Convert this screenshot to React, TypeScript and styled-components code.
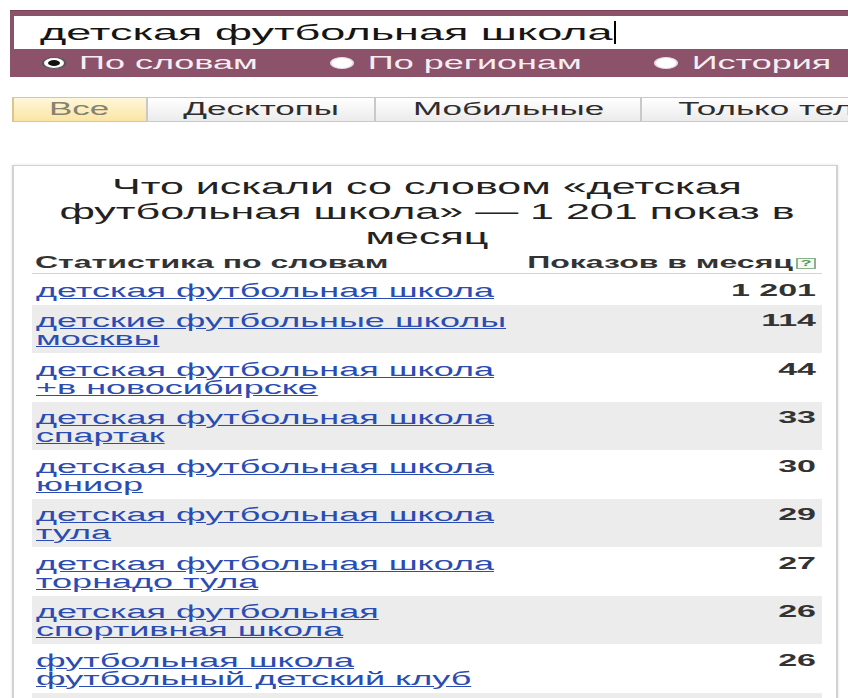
import React from 'react'
import styled, { createGlobalStyle, css } from 'styled-components'

// The page is laid out at half width and stretched 2x horizontally,
// the way the old stats screen looks when blown up to fill the window.

interface StatRow {
	phrase: string
	count: string
}

const rows: StatRow[] = [
	{ phrase: 'детская футбольная школа', count: '1 201' },
	{ phrase: 'детские футбольные школы москвы', count: '114' },
	{ phrase: 'детская футбольная школа +в новосибирске', count: '44' },
	{ phrase: 'детская футбольная школа спартак', count: '33' },
	{ phrase: 'детская футбольная школа юниор', count: '30' },
	{ phrase: 'детская футбольная школа тула', count: '29' },
	{ phrase: 'детская футбольная школа торнадо тула', count: '27' },
	{ phrase: 'детская футбольная спортивная школа', count: '26' },
	{ phrase: 'футбольная школа футбольный детский клуб', count: '26' },
	{ phrase: 'футбольная школа +для детей', count: '25' },
]

const modes = ['По словам', 'По регионам', 'История']
const tabs = ['Все', 'Десктопы', 'Мобильные', 'Только телефоны']

const GlobalStyle = createGlobalStyle`
	html, body {
		margin: 0;
		padding: 0;
		background: #fff;
		overflow: hidden;
	}
	body {
		font-family: "Liberation Sans", Arial, sans-serif;
	}
`

const Viewport = styled.div`
	width: 848px;
	height: 698px;
	overflow: hidden;
`

const Stretch = styled.div`
	width: 424px;
	padding-top: 10px;
	transform: scaleX(2);
	transform-origin: 0 0;
`

const SearchBar = styled.div`
	margin-left: 5px;
	height: 67px;
	box-sizing: border-box;
	padding: 5px 0 0 2px;
	background: #8c526a;
	border-top: 1px solid #7a4259;
`

const QueryField = styled.div`
	height: 33px;
	display: flex;
	align-items: center;
	padding-left: 13px;
	background: #fff;
	font-size: 22.5px;
	color: #151515;
	white-space: nowrap;
`

const Caret = styled.span`
	display: inline-block;
	width: 1px;
	height: 23px;
	margin-left: 1px;
	background: #000;
`

const ModeRow = styled.div`
	height: 28px;
	display: flex;
	align-items: center;
	padding-left: 14px;
	white-space: nowrap;
`

const ModeOption = styled.label`
	display: flex;
	align-items: center;
	gap: 6.5px;
	margin-right: 36.5px;
	font-size: 18px;
	color: #f6eef3;
`

const RadioDot = styled.span<{ $checked?: boolean }>`
	width: 12px;
	height: 12px;
	border-radius: 50%;
	box-sizing: border-box;
	background: #fff;
	border: 1px solid #e6dde2;
	display: flex;
	align-items: center;
	justify-content: center;
	${(p) =>
		p.$checked &&
		css`
			border-color: #555;
			&::after {
				content: '';
				width: 6px;
				height: 6px;
				border-radius: 50%;
				background: #111;
			}
		`}
`

const TabBar = styled.div`
	display: flex;
	margin: 20px 0 0 6.5px;
	width: max-content;
`

const Tab = styled.div<{ $active?: boolean }>`
	height: 25px;
	box-sizing: border-box;
	display: flex;
	align-items: center;
	padding: 0 18px;
	margin-left: -1px;
	font-size: 17.5px;
	white-space: nowrap;
	color: #2e2e2e;
	border: 1px solid #c9c9c9;
	background: linear-gradient(#ffffff, #ebebeb);
	${(p) =>
		p.$active &&
		css`
			color: #85826f;
			border-color: #d9c78f;
			background: linear-gradient(#fff7da, #fbe5a4);
		`}
`

const Card = styled.div`
	margin: 43px 5px 0 5.5px;
	padding: 9px 7px 0 9.5px;
	background: #fff;
	border: 1px solid #d3d3d3;
	box-shadow: 0 0 2px rgba(0, 0, 0, 0.12);
`

const Title = styled.div`
	font-size: 21.5px;
	line-height: 25px;
	text-align: center;
	color: #222;
`

const HeaderRow = styled.div`
	display: flex;
	justify-content: space-between;
	align-items: center;
	padding: 4px 3px 1px 1.5px;
	font-size: 16px;
	line-height: 18px;
	font-weight: bold;
	color: #333;
	border-bottom: 1px solid #d4d4d4;
`

const HeaderRight = styled.div`
	display: flex;
	align-items: center;
	gap: 1.5px;
`

const HelpBadge = styled.span`
	width: 10px;
	height: 11px;
	box-sizing: border-box;
	border: 1px solid #8fb08f;
	background: #f4faf2;
	color: #4f9a58;
	font-size: 9px;
	line-height: 9px;
	font-weight: bold;
	display: flex;
	align-items: center;
	justify-content: center;
`

const Row = styled.div<{ $shaded?: boolean }>`
	display: flex;
	justify-content: space-between;
	align-items: flex-start;
	padding: 7.5px 3px 5px 2px;
	background: ${(p) => (p.$shaded ? '#ececec' : '#fff')};
`

const Phrase = styled.div`
	max-width: 245px;
	font-size: 18px;
	line-height: 18px;
`

const PhraseLink = styled.a`
	color: #2a4cb3;
	text-decoration: underline;
`

const Count = styled.div`
	font-size: 17px;
	line-height: 18px;
	font-weight: bold;
	color: #333;
`

const App: React.FC = () => {
	return (
		<Viewport>
			<GlobalStyle />
			<Stretch>
				<SearchBar>
					<QueryField>
						детская футбольная школа
						<Caret />
					</QueryField>
					<ModeRow>
						{modes.map((mode, i) => (
							<ModeOption key={mode}>
								<RadioDot $checked={i === 0} />
								{mode}
							</ModeOption>
						))}
					</ModeRow>
				</SearchBar>

				<TabBar>
					{tabs.map((tab, i) => (
						<Tab key={tab} $active={i === 0}>
							{tab}
						</Tab>
					))}
				</TabBar>

				<Card>
					<Title>
						Что искали со словом «детская футбольная школа» — 1 201 показ в месяц
					</Title>
					<HeaderRow>
						<span>Статистика по словам</span>
						<HeaderRight>
							Показов в месяц
							<HelpBadge>?</HelpBadge>
						</HeaderRight>
					</HeaderRow>
					{rows.map((row, i) => (
						<Row key={row.phrase} $shaded={i % 2 === 1}>
							<Phrase>
								<PhraseLink href="#">{row.phrase}</PhraseLink>
							</Phrase>
							<Count>{row.count}</Count>
						</Row>
					))}
				</Card>
			</Stretch>
		</Viewport>
	)
}

export default App
